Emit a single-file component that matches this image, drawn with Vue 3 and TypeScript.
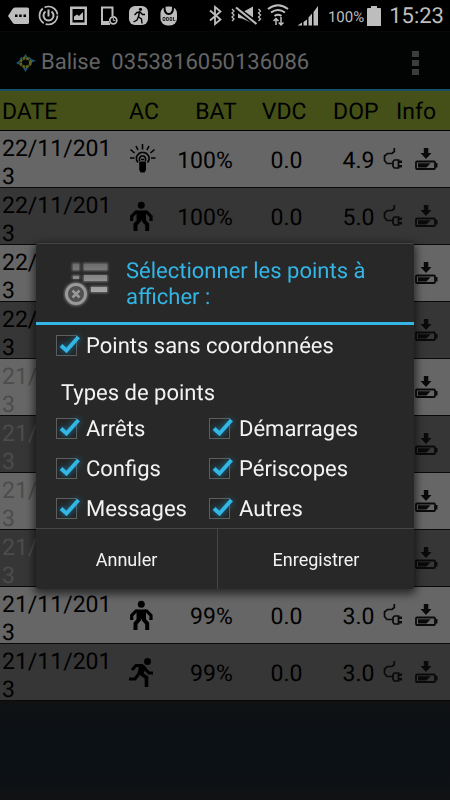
<script setup lang="ts">
import { reactive } from 'vue'

interface Point {
  date: string
  activity?: 'bulb' | 'stand' | 'run'
  battery?: string
  voltage?: string
  dop?: string
  faded?: boolean
}

const points: Point[] = [
  { date: '22/11/2013', activity: 'bulb', battery: '100%', voltage: '0.0', dop: '4.9' },
  { date: '22/11/2013', activity: 'stand', battery: '100%', voltage: '0.0', dop: '5.0' },
  { date: '22/11/2013' },
  { date: '22/11/2013' },
  { date: '21/11/2013', faded: true },
  { date: '21/11/2013', faded: true },
  { date: '21/11/2013', faded: true },
  { date: '21/11/2013', faded: true },
  { date: '21/11/2013', activity: 'stand', battery: '99%', voltage: '0.0', dop: '3.0' },
  { date: '21/11/2013', activity: 'run', battery: '99%', voltage: '0.0', dop: '3.0' },
]

const general = reactive({ id: 'no-coords', label: 'Points sans coordonnées', checked: true })
const types = reactive([
  { id: 'stops', label: 'Arrêts', checked: true },
  { id: 'starts', label: 'Démarrages', checked: true },
  { id: 'configs', label: 'Configs', checked: true },
  { id: 'periscopes', label: 'Périscopes', checked: true },
  { id: 'messages', label: 'Messages', checked: true },
  { id: 'others', label: 'Autres', checked: true },
])
</script>

<template>
  <div class="screen">
    <svg class="sprite" width="0" height="0">
      <symbol id="bulb" viewBox="0 0 28 30">
        <g fill="none" stroke="currentColor" stroke-width="1.6">
          <path d="M13.500 0v5.500M7 2l2 4M20 2l-2 4M1.500 5.500l4 3.500M25.500 5.500l-4 3.500M1 14h4.500M22 14h4.500" />
          <path d="M9 18.500L7.500 16v-3.500L10 9.500l2-1h3l2.500 1 2.500 3V16l-1.500 2.500" />
          <path d="M10.500 17v-3l1.500-2h3l1.500 2v3M12 15.500h3" />
        </g>
        <path d="M10.200 17.500h6.800V26l-1.500 2.500h-3.800L10.200 26z" fill="currentColor" />
      </symbol>
      <symbol id="stand" viewBox="0 0 28 30">
        <circle cx="12.300" cy="4.300" r="3.500" fill="currentColor" />
        <path d="M7.500 9.500h9.500v9.500H7.500z" fill="currentColor" />
        <g fill="none" stroke="currentColor">
          <path d="M9 11H7l-4.300 4.500V20M15.500 11h2.200l4.300 4.500V20" stroke-width="3.200" />
          <path d="M10 17.500v2l-3.500 4V30M14.700 17.500v2l3.500 4V30" stroke-width="4" />
        </g>
      </symbol>
      <symbol id="run" viewBox="0 0 28 30">
        <circle cx="18.500" cy="4.500" r="3.500" fill="currentColor" />
        <g fill="none" stroke="currentColor" stroke-width="3">
          <path d="M3 13l4-4.500h6l7 7.500h4" />
          <path d="M12 11l-3 7-3 4H0" />
          <path d="M11 16l6.500 4.500V30" stroke-width="3.600" />
        </g>
        <path d="M10 8h5l2.500 3-4 7-4.500-2z" fill="currentColor" />
      </symbol>
      <symbol id="plug" viewBox="0 0 20 22">
        <g fill="none" stroke="currentColor" stroke-width="1.700">
          <path d="M11.300 0v3.500L9 5.500H4.500L1.500 8v4.500l2.500 3h6" />
          <path d="M11.500 12h4v8h-4L10 18.500v-5z" />
          <path d="M15.500 13.700H19M15.500 18.200H19" stroke-width="2.400" />
        </g>
      </symbol>
      <symbol id="fetch" viewBox="0 0 23 22">
        <path d="M8.800 0h4.500v5h3.200L11 11 5.500 5h3.300zM3 15.300h12.500L11.500 19.500H3z" fill="currentColor" />
        <rect x="1" y="13.500" width="19" height="7.500" rx="1" fill="none" stroke="currentColor" stroke-width="1.800" />
        <path d="M21.500 15v4.500" stroke="currentColor" stroke-width="2" />
      </symbol>
    </svg>

    <header class="status">
      <svg class="notices" width="180" height="31" viewBox="0 0 180 31" aria-hidden="true">
        <path d="M8 16l4.500-7Q13.500 7.500 15 7.500h12.500q1.500 0 1.500 1.500v13.500q0 1.500-1.500 1.500H15q-1.500 0-2.500-1.500z" fill="#bdbdbd" />
        <path d="M15 14.500h2.500V17H15zM19.200 14.500h2.500V17h-2.500zM23.500 14.500H26V17h-2.500z" fill="#000" />
        <g fill="none" stroke="#bdbdbd" stroke-width="1.700">
          <circle cx="48.500" cy="15.500" r="9" stroke-dasharray="17 2" />
          <path d="M45.500 11.500a5 5 0 1 0 6 0M48.500 9.500v7" stroke-width="2" />
        </g>
        <path d="M70 6.500h17V25H70zM72.500 9v13.500h12V9z" fill="#bdbdbd" fill-rule="evenodd" />
        <path d="M74 20v-3.500l3-2 2 1.500 4-4v8z" fill="#bdbdbd" />
        <path d="M110 24h-8V7.500h10.500V16" fill="none" stroke="#bdbdbd" stroke-width="2" />
        <path d="M102 21h7v3h-7z" fill="#bdbdbd" />
        <circle cx="113.300" cy="20.300" r="3.500" fill="#000" stroke="#bdbdbd" stroke-width="1.700" />
        <path d="M113.300 18v2.500h2" fill="none" stroke="#bdbdbd" />
        <rect x="129" y="6" width="19" height="19" rx="6" fill="#bdbdbd" />
        <circle cx="140.500" cy="9.300" r="1.600" fill="#000" />
        <path d="M139.500 11.500l-1 5.500 3 2 .5 4.500M138.500 16.500l-1.500 3.500-3.500 2M134.500 15l2.500-2.500 3-.5 2.500 2.500h2.500" fill="none" stroke="#000" stroke-width="1.400" />
        <rect x="160.500" y="6.500" width="16.500" height="19" rx="7" fill="#bdbdbd" />
        <path d="M164.500 7q0 7 4.300 7t4.300-7" fill="none" stroke="#000" stroke-width="2" />
        <path d="M163 17.500h2v3h-2zM166.500 17.500h1.800v3h-1.800zM170 17.500h1.800v3H170zM173.500 17v3.500h1.800" stroke="#222" fill="none" stroke-width=".9" />
      </svg>
      <svg class="signals" width="112" height="31" viewBox="0 0 112 31" aria-hidden="true">
        <path d="M4 10.500l10.500 9L9 24V7l5.500 4.500L4 20.500" fill="none" stroke="#bdbdbd" stroke-width="1.800" />
        <path d="M32 18v-5.500h4l11-6v17l-11-5z" fill="#bdbdbd" />
        <path d="M28 7L52 24.500" stroke="#000" stroke-width="5.500" />
        <path d="M30 7.500L50.500 24" stroke="#bdbdbd" stroke-width="2.200" />
        <path d="M26 9l2 2-2 2 2 2-2 2 2 2-2 2M52.500 9l2 2-2 2 2 2-2 2 2 2-2 2" fill="none" stroke="#bdbdbd" stroke-width="1.300" />
        <g fill="none" stroke="#bdbdbd" stroke-width="2">
          <path d="M62 9q10-7.500 20 0M65 12.500q7-5 14 0M68.500 16q3.500-2.500 7 0" />
          <path d="M70 18.500V25M67.500 21l2.500-2.500 2.500 2.500M75 17v8M72.700 22.500L75 25l2.500-2.500" stroke-width="1.500" />
        </g>
        <path d="M91.500 25.500l4.500-3v3zM97.500 22l3.500-2.500v6h-3.500zM102.500 17.500l3.500-4v12h-3.500zM107.500 12l4.500-6v19.500h-4.500z" fill="#bdbdbd" />
      </svg>
      <span class="level">100%</span>
      <svg class="cell" width="14" height="20" viewBox="0 0 14 20" aria-hidden="true">
        <path d="M4 0h6v2h3q1 0 1 1v17H0V3q0-1 1-1h3z" fill="#bdbdbd" />
      </svg>
      <time class="clock">15:23</time>
    </header>

    <div class="appbar">
      <svg width="20" height="18" viewBox="0 0 20 18" aria-hidden="true">
        <path d="M9.500 0l2 3h-4zM0 9l3.500-2.500v4.500zM20 6.500L15 5v4zM9.500 18L7 14h5z" fill="#1c5570" />
        <ellipse cx="9.500" cy="8.500" rx="5" ry="4.300" fill="none" stroke="#5d6322" stroke-width="2.800" stroke-dasharray="3 .7" />
        <path d="M4 5.500l2-2M13 3.500l2 2" stroke="#1c5570" stroke-width="1.500" />
      </svg>
      <h1>Balise&nbsp; 0353816050136086</h1>
      <button class="menu" type="button" aria-label="Menu">
        <span></span><span></span><span></span>
      </button>
    </div>

    <table>
      <colgroup>
        <col class="c-date" /><col class="c-ac" /><col class="c-bat" /><col class="c-vdc" />
        <col class="c-dop" /><col class="c-plug" /><col />
      </colgroup>
      <thead>
        <tr>
          <th class="date">DATE</th>
          <th class="act">AC</th>
          <th>BAT</th>
          <th>VDC</th>
          <th>DOP</th>
          <th class="info" colspan="2">Info</th>
        </tr>
      </thead>
      <tbody>
        <tr v-for="(p, i) in points" :key="i" :class="{ faded: p.faded }">
          <td class="date"><div class="stamp">{{ p.date }}</div></td>
          <td class="act">
            <svg v-if="p.activity" width="28" height="30"><use :href="'#' + p.activity" /></svg>
          </td>
          <td>{{ p.battery }}</td>
          <td>{{ p.voltage }}</td>
          <td>{{ p.dop }}</td>
          <td class="icon">
            <svg v-if="p.activity" width="20" height="22"><use href="#plug" /></svg>
          </td>
          <td class="icon fetch"><svg width="23" height="22"><use href="#fetch" /></svg></td>
        </tr>
      </tbody>
    </table>

    <div class="overlay">
      <form class="dialog" role="dialog" aria-labelledby="dialog-title" @submit.prevent>
        <div class="heading">
          <svg width="48" height="48" viewBox="0 0 48 48" aria-hidden="true">
            <defs>
              <linearGradient id="metal" x1="0" y1="0" x2="0" y2="1">
                <stop offset="0" stop-color="#6c6c6c" />
                <stop offset="1" stop-color="#a8a8a8" />
              </linearGradient>
              <filter id="glow" x="-20%" y="-20%" width="140%" height="140%">
                <feGaussianBlur stdDeviation="1" />
              </filter>
            </defs>
            <g fill="#6c6c6c" filter="url(#glow)">
              <path d="M9 2h8v8H9zM20 2h25v8H20zM9 14h8v4H9zM20 14h25v7H20zM27 25h18v7H27z" />
              <circle cx="13" cy="33" r="12" />
            </g>
            <path d="M10 3h6v6h-6zM21 3h23v6H21zM10 15h6v3h-6zM21 14h23v6H21zM28 26h16v5H28z" fill="url(#metal)" />
            <circle cx="13" cy="33" r="9.500" fill="#505050" stroke="#999" stroke-width="3" />
            <path d="M9.500 29.500l7 7M16.500 29.500l-7 7" stroke="#999" stroke-width="2.500" />
          </svg>
          <h2 id="dialog-title">Sélectionner les points à afficher :</h2>
        </div>
        <div class="body">
          <label class="option" :for="general.id">
            <span class="box">
              <input :id="general.id" v-model="general.checked" type="checkbox" />
              <svg width="28" height="24" viewBox="0 0 28 24" aria-hidden="true">
                <path d="M5 10.500l5.500 5L22.500 2" />
              </svg>
            </span>
            {{ general.label }}
          </label>
          <fieldset>
            <legend>Types de points</legend>
            <div class="types">
              <label v-for="t in types" :key="t.id" class="option" :for="t.id">
                <span class="box">
                  <input :id="t.id" v-model="t.checked" type="checkbox" />
                  <svg width="28" height="24" viewBox="0 0 28 24" aria-hidden="true">
                    <path d="M5 10.500l5.500 5L22.500 2" />
                  </svg>
                </span>
                {{ t.label }}
              </label>
            </div>
          </fieldset>
        </div>
        <div class="actions">
          <button type="button">Annuler</button>
          <button type="submit">Enregistrer</button>
        </div>
      </form>
    </div>
  </div>
</template>

<style>
body {
  margin: 0;
  background: #0f1113;
}
</style>

<style scoped>
* {
  box-sizing: border-box;
}
.screen {
  min-height: 100vh;
  font-family: Roboto, "Liberation Sans", sans-serif;
  text-rendering: geometricPrecision;
  color: #000;
  background: linear-gradient(#0d1012, #0f1113 88%, #0c1115 92%, #0d1115 97%, #111213);
}
.sprite {
  position: absolute;
}
.status {
  display: flex;
  align-items: center;
  height: 31px;
  padding-right: 6px;
  background: #000;
  color: #bdbdbd;
}
.signals {
  margin-left: auto;
}
.level {
  margin-left: 10px;
  padding-top: 2px;
  font-size: 15px;
}
.cell {
  margin-left: 3px;
}
.clock {
  margin-left: 8px;
  padding-top: 2px;
  font-size: 22px;
}
.appbar {
  display: flex;
  align-items: center;
  height: 60px;
  padding: 4px 24px 0 16px;
  background: #020303;
  border-top: 1px solid #080808;
  border-bottom: 2px solid #145068;
}
h1 {
  flex: 1;
  margin: 0 0 0 5px;
  font-size: 22px;
  font-weight: 400;
  line-height: 28px;
  color: #656565;
}
.menu {
  display: flex;
  flex-direction: column;
  align-items: center;
  gap: 3px;
  width: 22px;
  padding: 0;
  border: 0;
  background: none;
}
.menu span {
  width: 7px;
  height: 6px;
  background: #3c3c3c;
}
table {
  width: 100%;
  table-layout: fixed;
  border-collapse: collapse;
  font-size: 23px;
  line-height: 28px;
}
.c-date { width: 26%; }
.c-ac { width: 12%; }
.c-bat { width: 15.5%; }
.c-vdc { width: 15.5%; }
.c-dop { width: 16%; }
.c-plug { width: 5%; }
th {
  height: 39px;
  padding: 4px 4px 0 0;
  font-weight: 400;
  text-align: right;
  white-space: nowrap;
  background: #445017;
  border-bottom: 1px solid #000;
}
td {
  height: 57px;
  padding: 4px 8px 0 0;
  text-align: right;
  background: #666;
  border-bottom: 1px solid #0a0a0a;
}
tbody tr:nth-child(even) td {
  background: #363636;
}
th.date {
  padding: 4px 0 0 2px;
  text-align: left;
}
td.date {
  padding: 0 0 0 2px;
  text-align: left;
  word-break: break-all;
}
.stamp {
  margin: 4px 0 -4px;
}
.faded .date {
  color: #4c4c4c;
}
th.act {
  padding: 4px 0 0;
  text-align: center;
}
td.act {
  padding: 0 0 0 12px;
  text-align: left;
}
th.info {
  padding: 4px 14px 0 0;
}
td.icon {
  padding: 0;
  text-align: left;
  color: #0a0a0a;
}
td.fetch {
  padding: 0 12px 0 0;
  text-align: right;
}
td svg {
  display: block;
}
td.fetch svg {
  margin-left: auto;
}
.overlay {
  position: fixed;
  inset: 31px 0 0;
  display: flex;
  align-items: center;
  justify-content: center;
  padding: 0 36px;
}
.dialog {
  flex: 1;
  max-width: 560px;
  overflow: hidden;
  border-top: 1px solid #444;
  border-radius: 3px;
  background: #282828;
  box-shadow: 0 3px 8px 2px rgba(0, 0, 0, 0.6);
  color: #f3f3f3;
}
.heading {
  display: flex;
  align-items: center;
  gap: 15px;
  height: 81px;
  padding: 4px 24px 0 27px;
  border-bottom: 3px solid #33b5e5;
}
.heading svg {
  flex: none;
}
h2 {
  margin: 0;
  font-size: 22px;
  font-weight: 400;
  line-height: 26px;
  color: #33b5e5;
}
.body {
  padding: 0 16px 0 20px;
  font-size: 22px;
  line-height: 28px;
}
.option {
  display: flex;
  align-items: center;
  gap: 2px;
  height: 40px;
  padding-top: 4px;
  white-space: nowrap;
}
.box {
  display: grid;
  flex: none;
}
.box input,
.box svg {
  grid-area: 1 / 1;
}
.box input {
  width: 21px;
  height: 21px;
  margin: 0;
  appearance: none;
  border: 1px solid #5e5e5e;
  background: #242424;
}
.box svg {
  visibility: hidden;
  pointer-events: none;
  fill: none;
  stroke: #33b5e5;
  stroke-width: 4px;
  filter: drop-shadow(0 0 3px #16789c);
}
.box input:checked + svg {
  visibility: visible;
}
fieldset {
  min-width: 0;
  margin: 0;
  padding: 0;
  border: 0;
}
legend {
  padding: 15px 0 0 5px;
}
.types {
  display: grid;
  grid-template-columns: 153px 1fr;
}
.actions {
  display: grid;
  grid-template-columns: 181px 1fr;
  border-top: 1px solid #454545;
}
.actions button {
  height: 60px;
  padding: 2px 0 0;
  border: 0;
  background: none;
  font: inherit;
  font-size: 18px;
  color: #f3f3f3;
}
.actions button + button {
  border-left: 1px solid #454545;
}
</style>
